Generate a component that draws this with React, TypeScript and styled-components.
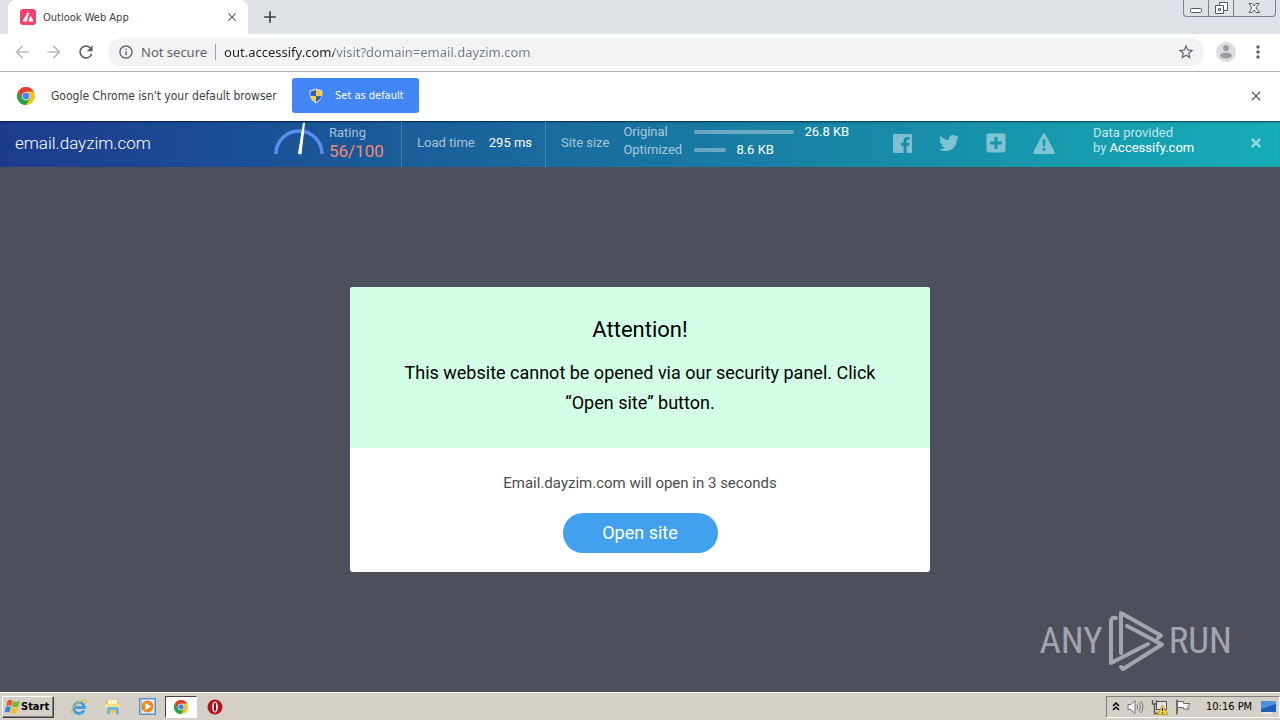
import React, { useState } from "react";
import styled, { createGlobalStyle } from "styled-components";
import {
  MdAdd,
  MdArrowBack,
  MdArrowForward,
  MdClose,
  MdInfoOutline,
  MdMoreVert,
  MdRefresh,
  MdStarBorder,
} from "react-icons/md";
import { FaTimes, FaTwitter } from "react-icons/fa";

const UI_FONT = `"Noto Sans", "Open Sans", sans-serif`;
const OS_FONT = `"DejaVu Sans Condensed", "DejaVu Sans", sans-serif`;
const PAGE_FONT = `Roboto, "Liberation Sans", sans-serif`;

const GlobalStyle = createGlobalStyle`
  *, *::before, *::after { box-sizing: border-box; }
  body { margin: 0; font-family: ${PAGE_FONT}; }
  button, input { font: inherit; }
  button { padding: 0; border: 0; background: none; color: inherit; cursor: pointer; }
  h1, p { margin: 0; }
  svg { display: block; flex: none; }
`;

const Screen = styled.div`
  display: flex;
  flex-direction: column;
  min-height: 100vh;
  background: #4d505b;
`;

/* Browser window */

const TabStrip = styled.header`
  display: flex;
  align-items: flex-start;
  height: 34px;
  padding: 0 4px 0 8px;
  background: #dee1e6;
  font-family: ${OS_FONT};
`;

const Tab = styled.div`
  display: flex;
  align-items: center;
  gap: 7px;
  width: 240px;
  height: 34px;
  padding: 0 10px 0 12px;
  border-radius: 8px 8px 0 0;
  background: #fff;
  color: #3c4043;
  font-size: 11px;
`;

const TabTitle = styled.span`
  flex: 1;
`;

const IconButton = styled.button<{ $size?: number; $color?: string }>`
  display: flex;
  align-items: center;
  justify-content: center;
  flex: none;
  width: ${(p) => p.$size ?? 20}px;
  height: ${(p) => p.$size ?? 20}px;
  color: ${(p) => p.$color ?? "#5f6368"};
`;

const NewTab = styled(IconButton)`
  height: 34px;
  margin-left: 12px;
`;

const WindowButtons = styled.div`
  display: flex;
  height: 17px;
  margin-left: auto;
  border: 1px solid #7d8188;
  border-top: 0;
  border-radius: 0 0 4px 4px;
`;

const WindowButton = styled.button<{ $width: number }>`
  display: flex;
  justify-content: center;
  width: ${(p) => p.$width}px;
  & + & {
    border-left: 1px solid #7d8188;
  }
`;

const Toolbar = styled.nav`
  display: flex;
  align-items: center;
  height: 38px;
  padding: 0 12px 2px;
  gap: 12px;
  background: #fff;
  border-bottom: 1px solid #b4b6b8;
  font-family: ${UI_FONT};
`;

const Omnibox = styled.div`
  display: flex;
  align-items: center;
  flex: 1;
  height: 28px;
  padding: 0 8px 0 10px;
  border-radius: 14px;
  background: #f1f3f4;
  color: #5f6368;
  font-size: 13px;
`;

const Security = styled.label`
  display: flex;
  align-items: center;
  gap: 7px;
  height: 16px;
  padding-right: 8px;
  margin-right: 8px;
  border-right: 1px solid #9aa0a6;
`;

const Address = styled.input`
  flex: 1;
  min-width: 0;
  padding: 0;
  border: 0;
  outline: 0;
  color: transparent;
  background: linear-gradient(90deg, #202124 110px, #777b80 110px);
  background-clip: text;
  -webkit-background-clip: text;
`;

const InfoBar = styled.div`
  display: flex;
  align-items: center;
  height: 49px;
  padding: 0 14px 2px 17px;
  background: #fff;
  color: #3c4043;
  font-family: ${OS_FONT};
  font-size: 12px;
`;

const InfoText = styled.span`
  flex: none;
  width: 257px;
  padding-left: 16px;
`;

const DefaultButton = styled.button`
  display: flex;
  align-items: center;
  gap: 11px;
  height: 35px;
  width: 127px;
  margin-right: auto;
  padding-left: 16px;
  border-radius: 3px;
  background: #4285f4;
  color: #fff;
  font-size: 11px;
`;

/* Site information panel */

const Panel = styled.section`
  display: flex;
  align-items: stretch;
  height: 46px;
  padding-right: 16px;
  background: linear-gradient(90deg, #1d3b8e, #1a5296 22%, #1a6a9f 42%, #1787a6 66%, #16adb7);
  box-shadow: inset 0 2px 2px -1px rgba(0, 0, 0, 0.6);
  color: #fff;
  font-size: 13px;
  line-height: 18px;
`;

const Domain = styled.div`
  flex: 1;
  align-self: center;
  padding: 0 0 2px 15px;
  font-size: 17px;
  font-weight: 300;
`;

const Cell = styled.div<{ $width: number; $divided?: boolean }>`
  display: flex;
  align-items: center;
  flex: none;
  width: ${(p) => p.$width}px;
  padding-bottom: 2px;
  border-right: ${(p) => (p.$divided ? "1px solid rgba(255, 255, 255, 0.2)" : "0")};
`;

const StatCell = styled(Cell)`
  padding-left: 15px;
  gap: 14px;
`;

const Muted = styled.span`
  color: rgba(255, 255, 255, 0.62);
`;

const Rating = styled.div`
  display: flex;
  flex-direction: column;
  padding: 0 0 2px 5px;
`;

const Score = styled.span`
  color: #f58a72;
  font-size: 17px;
`;

const Sizes = styled.div`
  display: grid;
  grid-template-columns: 71px auto;
  padding-bottom: 4px;
`;

const SizeValue = styled.div`
  display: flex;
  align-items: center;
  gap: 10px;
`;

const SizeBar = styled.div<{ $width: number }>`
  width: ${(p) => p.$width}px;
  height: 4px;
  border-radius: 2px;
  background: rgba(255, 255, 255, 0.35);
`;

const Share = styled(Cell)`
  gap: 27px;
  color: rgba(255, 255, 255, 0.45);
`;

const ShareLink = styled.a`
  color: inherit;
`;

const Provider = styled(Cell)`
  flex-direction: column;
  align-items: flex-start;
  justify-content: center;
  padding-bottom: 8px;
  line-height: 15px;
  color: rgba(255, 255, 255, 0.75);
  a {
    color: #fff;
    text-decoration: none;
  }
`;

/* Page content */

const Main = styled.main`
  position: relative;
  display: flex;
  flex: 1;
  align-items: center;
  justify-content: center;
  padding: 16px;
`;

const Dialog = styled.section`
  width: 580px;
  border-radius: 3px;
  overflow: hidden;
  background: #fff;
  text-align: center;
`;

const Notice = styled.div`
  padding: 28px 50px 30px;
  background: #d4ffe7;
  color: #000;
  font-size: 18px;
  line-height: 30px;
`;

const Title = styled.h1`
  margin-bottom: 13px;
  font-size: 22px;
  font-weight: 400;
`;

const Action = styled.div`
  display: flex;
  flex-direction: column;
  align-items: center;
  gap: 18px;
  padding: 23px 20px 19px;
  color: #4c4c4c;
  font-size: 15px;
  line-height: 24px;
`;

const OpenButton = styled.button`
  width: 155px;
  height: 40px;
  border-radius: 20px;
  background: #42a1ee;
  color: #fff;
  font-size: 18px;
`;

const Watermark = styled.div`
  position: absolute;
  right: 48px;
  bottom: 20px;
  display: flex;
  align-items: center;
  gap: 4px;
  color: #a3a5ac;
  font-family: "Roboto Condensed", Roboto, sans-serif;
  font-size: 37px;
  line-height: 62px;
`;

/* Desktop taskbar */

const Taskbar = styled.footer`
  display: flex;
  align-items: center;
  height: 28px;
  padding: 0 0 0 2px;
  border-top: 1px solid #fff;
  background: #d4d0c8;
  color: #000;
  font-family: ${OS_FONT};
  font-size: 11px;
`;

const StartButton = styled.button`
  display: flex;
  align-items: center;
  width: 52px;
  height: 22px;
  margin-right: 9px;
  padding-left: 1px;
  border: 1px solid;
  border-color: #fff #404040 #404040 #fff;
  box-shadow: inset -1px -1px #808080;
  font-weight: 700;
`;

const TaskButton = styled.button<{ $active?: boolean }>`
  display: flex;
  align-items: center;
  justify-content: center;
  width: 32px;
  height: 22px;
  margin-right: 2px;
  border: 1px solid;
  border-color: ${(p) => (p.$active ? "#404040 #fff #fff #404040" : "transparent")};
  background: ${(p) => (p.$active ? "#fff" : "none")};
`;

const Tray = styled.div`
  display: flex;
  align-items: center;
  gap: 7px;
  height: 22px;
  width: 174px;
  margin-left: auto;
  padding: 0 3px 0 5px;
  border: 1px solid;
  border-color: #808080 #fff #fff #808080;
`;

const Clock = styled.time`
  flex: 1;
  padding-left: 7px;
  white-space: nowrap;
`;

const ChromeLogo = ({ size }: { size: number }) => (
  <svg width={size} height={size} viewBox="0 0 24 24" aria-hidden="true">
    <circle cx="12" cy="12" r="12" fill="#fbc116" />
    <path d="M12 12 6.8 15 1.6 6A12 12 0 0 1 22.4 6H12Z" fill="#e33b2e" />
    <path d="M1.6 6 6.8 15 12 18 17.2 15 12 24A12 12 0 0 1 1.6 6Z" fill="#25a04a" />
    <circle cx="12" cy="12" r="5.500" fill="#fff" />
    <circle cx="12" cy="12" r="4.6" fill="#4688f1" />
  </svg>
);

const Favicon = () => (
  <svg width="16" height="16" viewBox="0 0 16 16" aria-hidden="true">
    <rect width="16" height="16" rx="3" fill="#f0436d" />
    <path d="M7.8 3.500q1.200-.5 1.300.8L6.600 12.500H3.200q-.8-.4-.2-1.300Z" fill="#fff" />
    <path d="M10.300 7.500q.7-.4 1 .2l1.900 3.700q.3 1-.6 1.100H9.200q-1-.2-.7-1.200Z" fill="#fff" />
  </svg>
);

const Shield = () => (
  <svg width="16" height="16" viewBox="0 0 16 16" aria-hidden="true">
    <path d="M8 .5 14.5 2.5c.3 6-1.500 10-6.500 13C3 12.500 1.200 8.500 1.500 2.500Z" fill="#d6d9dc" />
    <path d="M8 2v6H2.600V3.500Z" fill="#2c64b8" />
    <path d="M8 2v6h5.400V3.500Z" fill="#f6cf2f" />
    <path d="M8 8v6C5 12.500 3.200 10.500 2.600 8Z" fill="#f6cf2f" />
    <path d="M8 8v6c3-1.500 4.800-3.500 5.400-6Z" fill="#2c64b8" />
  </svg>
);

const Avatar = () => (
  <svg width="20" height="20" viewBox="0 0 20 20" aria-hidden="true">
    <circle cx="10" cy="10" r="10" fill="#dcdddf" />
    <circle cx="10" cy="6" r="3" fill="#9b9da0" />
    <ellipse cx="10" cy="13.500" rx="6" ry="3" fill="#9b9da0" />
  </svg>
);

const Gauge = () => (
  <svg width="50" height="44" viewBox="0 0 50 44" aria-hidden="true">
    <path d="M2 33a23 23 0 0 1 46 0" fill="none" stroke="#5b8cf0" strokeWidth="3.500" />
    <path d="M24.500 32.500 29.500 2h1L27 33Z" fill="#fff" stroke="#fff" strokeWidth="1" />
  </svg>
);

const FacebookIcon = () => (
  <svg width="19" height="19" viewBox="0 0 19 19" fill="currentColor" aria-hidden="true">
    <path d="M1 0h17a1 1 0 0 1 1 1v17a1 1 0 0 1-1 1h-4.500v-7.200H16l.4-2.900h-2.900V7.200c0-.9.300-1.400 1.400-1.400h1.500V3.200c-.300 0-1.200-.1-2.200-.1-2.200 0-3.700 1.300-3.700 3.700v2.100H8v2.900h2.500V19H1a1 1 0 0 1-1-1V1a1 1 0 0 1 1-1Z" />
  </svg>
);

const PlusIcon = () => (
  <svg width="20" height="20" viewBox="0 0 20 20" fill="currentColor" fillRule="evenodd" aria-hidden="true">
    <path d="M3 .5h14a2.500 2.500 0 0 1 2.500 2.500v14a2.500 2.500 0 0 1-2.500 2.500H3A2.500 2.500 0 0 1 .5 17V3A2.500 2.500 0 0 1 3 .5ZM8.500 4v4.500H4v3h4.500V16h3v-4.500H16v-3h-4.500V4Z" />
  </svg>
);

const WarningIcon = () => (
  <svg width="22" height="21" viewBox="0 0 22 21" fill="currentColor" fillRule="evenodd" aria-hidden="true">
    <path d="M10 .8q1-1.300 2 0l9.700 18.200q.6 1.700-1 2H1.300q-1.600-.3-1-2ZM9.300 6.500l.5 7h2.400l.5-7ZM9.500 15v2.800h3V15Z" />
  </svg>
);

const PlayMark = () => (
  <svg width="58" height="62" viewBox="0 0 58 62" fill="none" stroke="currentColor" strokeWidth="4" strokeLinejoin="round" strokeLinecap="round" aria-hidden="true">
    <path d="M9 8Q4 7 4 11V53L41 34" />
    <path d="M14 43V3L54 25.500 51 28" />
    <path d="M20 16 55 34.500 16 59 14 57" />
  </svg>
);

const WindowsFlag = () => (
  <svg width="17" height="16" viewBox="0 0 16 16" aria-hidden="true">
    <path d="M3 1.500Q5.500 0 8 1.700L6.800 7.200Q4.500 5.600 1.700 7Z" fill="#e8592b" />
    <path d="M8.800 2.100Q11.500 3.600 15.500 2L14 7.500Q10.500 9 7.600 7.500Z" fill="#7fb536" />
    <path d="M1.400 8Q4 6.600 6.500 8.200L5 13.600Q3 12 0 13.500Z" fill="#3b86d8" />
    <path d="M7.300 8.600Q10 10 13.600 8.500L12.100 14Q9 15.500 6 14Z" fill="#f7bd1d" />
  </svg>
);

const ExplorerIcon = () => (
  <svg width="18" height="18" viewBox="0 0 18 18" fill="none" aria-hidden="true">
    <path d="M14 12.500A5.500 5.500 0 1 1 14.600 9.500H5" stroke="#3ea0e4" strokeWidth="2.800" />
    <path d="M2.500 16C-1 14 5 4.500 14 1.800c3.500-.8 3 2 1.500 4" stroke="#e6bd3a" strokeWidth="1.300" />
  </svg>
);

const FolderIcon = () => (
  <svg width="18" height="18" viewBox="0 0 18 18" aria-hidden="true">
    <path d="M2 3h5l1.500 1.500H15V15H2Z" fill="#eac75c" />
    <path d="M4 2h9v5H4Z" fill="#fbf3c6" />
    <path d="M1 6h15v6H1Z" fill="#f5df8d" />
    <path d="M3 16v-5.500q0-1.500 2-1.500h8q2 0 2 1.500V16h-3v-4H6v4Z" fill="#6db6e4" />
  </svg>
);

const MediaIcon = () => (
  <svg width="17" height="17" viewBox="0 0 17 17" aria-hidden="true">
    <rect x=".5" y=".5" width="16" height="16" fill="#9cc6ea" stroke="#5b8fc4" />
    <rect x="3" y="2" width="12" height="13" fill="#e2effa" />
    <circle cx="8.500" cy="8.500" r="6" fill="#f08a1c" />
    <path d="m6.500 5 5.500 3.500-5.500 3.500Z" fill="#fff" />
  </svg>
);

const OperaIcon = () => (
  <svg width="16" height="16" viewBox="0 0 16 16" aria-hidden="true">
    <circle cx="8" cy="8" r="7.500" fill="#b5121b" />
    <ellipse cx="8" cy="8" rx="2.800" ry="5.500" fill="#fff" />
    <ellipse cx="8" cy="8" rx="1.100" ry="4.800" fill="#8c0d14" />
  </svg>
);

const ChevronsIcon = () => (
  <svg width="8" height="10" viewBox="0 0 8 10" fill="none" stroke="#000" strokeWidth="1.500" aria-hidden="true">
    <path d="m1 4 3-3 3 3M1 8l3-3 3 3" />
  </svg>
);

const SpeakerIcon = () => (
  <svg width="17" height="16" viewBox="0 0 17 16" fill="none" stroke="#77777a" aria-hidden="true">
    <path d="M1 5.500h3l4-4v13l-4-4H1Z" fill="#f6f6f6" />
    <path d="M10 5.500q1.500 2.500 0 5M12 3.500q3 4.500 0 9M14 2q4 6 0 12" />
  </svg>
);

const NetworkIcon = () => (
  <svg width="17" height="16" viewBox="0 0 17 16" aria-hidden="true">
    <rect x="5.500" y="2.500" width="10" height="8" fill="#e4e4e4" stroke="#55575a" />
    <path d="M1.500 1v4h4V1M3.500 5v9.500h4" fill="none" stroke="#55575a" strokeWidth="1.400" />
    <path d="m11.500 6 5 9.500h-10Z" fill="#fbd824" stroke="#a88a10" strokeWidth=".7" />
    <path d="M11.500 9v3M11.500 13v1.300" stroke="#222" strokeWidth="1.200" />
  </svg>
);

const FlagIcon = () => (
  <svg width="17" height="16" viewBox="0 0 17 16" fill="#fbfbfb" stroke="#6b6b6e" aria-hidden="true">
    <path d="M2.500 2.500h6v2h6.500l-2.500 3 1.500 2.500h-5.500v-1.500h-6Z" />
    <path d="M1.500 1v14h1V1Z" />
  </svg>
);

const DesktopIcon = () => (
  <svg width="15" height="14" viewBox="0 0 15 14" aria-hidden="true">
    <rect width="15" height="11" y="1" fill="#1f5fb8" />
    <path d="M0 1h15v3L0 9Z" fill="#4d92dd" />
    <path d="M1 13h10" stroke="#eef" strokeWidth="1.500" />
  </svg>
);

export default function App() {
  const [url, setUrl] = useState("out.accessify.com/visit?domain=email.dayzim.com");

  return (
    <>
      <GlobalStyle />
      <Screen>
        <TabStrip>
          <Tab>
            <Favicon />
            <TabTitle>Outlook Web App</TabTitle>
            <IconButton $size={12} aria-label="Close tab">
              <MdClose size={14} />
            </IconButton>
          </Tab>
          <NewTab aria-label="New tab" $color="#3c4043">
            <MdAdd size={20} />
          </NewTab>
          <WindowButtons>
            <WindowButton $width={24} aria-label="Minimize">
              <svg width="13" height="16" viewBox="0 0 13 16" fill="#fff" stroke="#55585e">
                <rect x=".5" y="8.500" width="11" height="4" rx="1" />
              </svg>
            </WindowButton>
            <WindowButton $width={25} aria-label="Restore">
              <svg width="13" height="16" viewBox="0 0 13 16" fill="#fff" stroke="#55585e">
                <path d="M4.500 2.500h8v8h-8Z" />
                <path d="M.5 5.500h8v8h-8Z" />
                <path d="M3.500 8.500h2v2h-2Z" />
              </svg>
            </WindowButton>
            <WindowButton $width={42} aria-label="Close">
              <svg width="13" height="16" viewBox="0 0 13 16" fill="#fff" stroke="#55585e">
                <path d="M1 3.500h3l2 2.500 2-2.500h3L8 8l3.500 4.500H8L6 10l-2 2.500H1L4 8Z" />
              </svg>
            </WindowButton>
          </WindowButtons>
        </TabStrip>

        <Toolbar aria-label="Navigation">
          <IconButton $color="#babcbe" aria-label="Back">
            <MdArrowBack size={20} />
          </IconButton>
          <IconButton $color="#babcbe" aria-label="Forward">
            <MdArrowForward size={20} />
          </IconButton>
          <IconButton aria-label="Reload">
            <MdRefresh size={20} />
          </IconButton>
          <Omnibox>
            <Security htmlFor="address">
              <MdInfoOutline size={16} />
              Not secure
            </Security>
            <Address id="address" value={url} onChange={(e) => setUrl(e.target.value)} spellCheck={false} />
            <IconButton aria-label="Bookmark this page">
              <MdStarBorder size={18} />
            </IconButton>
          </Omnibox>
          <IconButton aria-label="Profile">
            <Avatar />
          </IconButton>
          <IconButton aria-label="Menu">
            <MdMoreVert size={20} />
          </IconButton>
        </Toolbar>

        <InfoBar>
          <ChromeLogo size={18} />
          <InfoText>Google Chrome isn't your default browser</InfoText>
          <DefaultButton>
            <Shield />
            Set as default
          </DefaultButton>
          <IconButton aria-label="Dismiss">
            <MdClose size={16} />
          </IconButton>
        </InfoBar>

        <Panel aria-label="Site information">
          <Domain>email.dayzim.com</Domain>
          <Cell $width={128} $divided>
            <Gauge />
            <Rating>
              <Muted>Rating</Muted>
              <Score>56/100</Score>
            </Rating>
          </Cell>
          <StatCell $width={144} $divided>
            <Muted>Load time</Muted>
            <span>295 ms</span>
          </StatCell>
          <StatCell $width={347}>
            <Muted>Site size</Muted>
            <Sizes>
              <Muted>Original</Muted>
              <SizeValue>
                <SizeBar $width={100} />
                26.8 KB
              </SizeValue>
              <Muted>Optimized</Muted>
              <SizeValue>
                <SizeBar $width={32} />
                8.6 KB
              </SizeValue>
            </Sizes>
          </StatCell>
          <Share $width={200}>
            <ShareLink href="#facebook" aria-label="Facebook">
              <FacebookIcon />
            </ShareLink>
            <ShareLink href="#twitter" aria-label="Twitter">
              <FaTwitter size={20} />
            </ShareLink>
            <ShareLink href="#more" aria-label="More">
              <PlusIcon />
            </ShareLink>
            <ShareLink href="#report" aria-label="Report">
              <WarningIcon />
            </ShareLink>
          </Share>
          <Provider $width={155}>
            <span>Data provided</span>
            <span>
              by <a href="#accessify">Accessify.com</a>
            </span>
          </Provider>
          <Cell $width={16}>
            <IconButton $size={16} $color="rgba(255, 255, 255, 0.55)" aria-label="Close panel">
              <FaTimes size={14} />
            </IconButton>
          </Cell>
        </Panel>

        <Main>
          <Dialog role="dialog" aria-labelledby="dialog-title">
            <Notice>
              <Title id="dialog-title">Attention!</Title>
              <p>This website cannot be opened via our security panel. Click “Open site” button.</p>
            </Notice>
            <Action>
              <p>Email.dayzim.com will open in 3 seconds</p>
              <OpenButton>Open site</OpenButton>
            </Action>
          </Dialog>
          <Watermark>
            <span>ANY</span>
            <PlayMark />
            <span>RUN</span>
          </Watermark>
        </Main>

        <Taskbar>
          <StartButton>
            <WindowsFlag />
            Start
          </StartButton>
          <TaskButton aria-label="Internet Explorer">
            <ExplorerIcon />
          </TaskButton>
          <TaskButton aria-label="Explorer">
            <FolderIcon />
          </TaskButton>
          <TaskButton aria-label="Media Player">
            <MediaIcon />
          </TaskButton>
          <TaskButton $active aria-label="Chrome">
            <ChromeLogo size={14} />
          </TaskButton>
          <TaskButton aria-label="Opera">
            <OperaIcon />
          </TaskButton>
          <Tray>
            <ChevronsIcon />
            <SpeakerIcon />
            <NetworkIcon />
            <FlagIcon />
            <Clock>10:16 PM</Clock>
            <DesktopIcon />
          </Tray>
        </Taskbar>
      </Screen>
    </>
  );
}
